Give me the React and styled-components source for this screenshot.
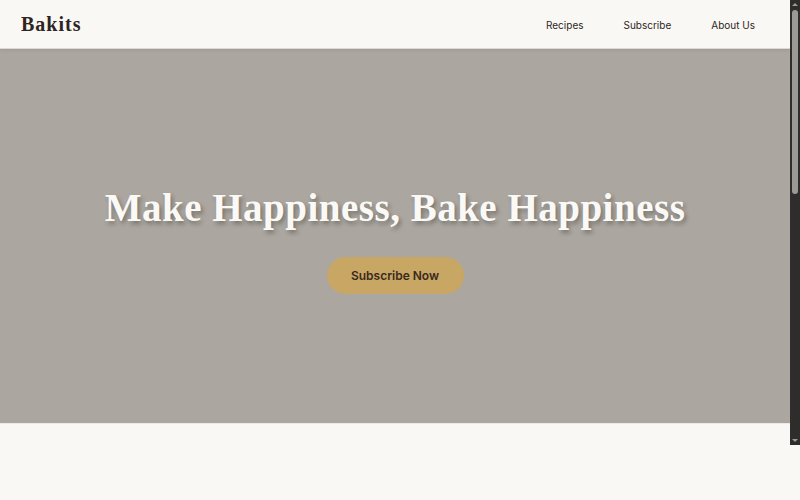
import React from 'react';
import styled, { createGlobalStyle } from 'styled-components';

const GlobalStyle = createGlobalStyle`
	html, body {
		margin: 0;
		padding: 0;
		background: #faf8f5;
		overflow: hidden;
	}
	* {
		box-sizing: border-box;
	}
`;

const Frame = styled.div`
	display: flex;
	height: 445px;
`;

const Page = styled.div`
	flex: 1;
	overflow-y: auto;
	background: #faf8f5;
	color: #2d2521;
	font-family: Inter, 'Noto Sans', sans-serif;
	scrollbar-width: none;
`;

const ScrollRail = styled.div`
	width: 10px;
	background: #2e2d2b;
	display: flex;
	flex-direction: column;
	align-items: center;
	padding: 10px 0;
	position: relative;
`;

const RailArrow = styled.span`
	position: absolute;
	left: 2px;
	width: 0;
	height: 0;
	border-left: 3px solid transparent;
	border-right: 3px solid transparent;
	${p => (p.$down ? 'bottom: 3px; border-top: 3px solid #9d9a96;' : 'top: 3px; border-bottom: 3px solid #9d9a96;')}
`;

const RailThumb = styled.div`
	width: 6px;
	height: 184px;
	border-radius: 3px;
	background: #9d9a96;
`;

const Header = styled.header`
	height: 49px;
	display: flex;
	align-items: center;
	justify-content: space-between;
	padding: 0 35px 0 21px;
	background: #faf8f5;
	border-bottom: 1px solid #dcd8d2;
	box-shadow: 0 1px 4px rgba(0, 0, 0, 0.08);
	position: relative;
	z-index: 1;
`;

const Logo = styled.div`
	font-family: 'Liberation Serif', 'DejaVu Serif', serif;
	font-weight: 700;
	font-size: 20px;
	letter-spacing: 1px;
	color: #2d2521;
`;

const Nav = styled.nav`
	display: flex;
	gap: 40px;
`;

const NavLink = styled.a`
	font-size: 10px;
	color: #2d2521;
	text-decoration: none;
	margin-top: 1px;
`;

const Hero = styled.section`
	height: 375px;
	background: #aba69f;
	display: flex;
	flex-direction: column;
	align-items: center;
	justify-content: center;
	padding-top: 6px;
	border-bottom: 1px solid #ece9e4;
`;

const Title = styled.h1`
	margin: 0 0 27px;
	font-family: 'Liberation Serif', 'DejaVu Serif', serif;
	font-weight: 700;
	font-size: 39px;
	letter-spacing: 0.5px;
	color: #fbf9f6;
	text-shadow: 2px 3px 4px rgba(0, 0, 0, 0.3);
`;

const Button = styled.button`
	width: 137px;
	height: 37px;
	border: none;
	border-radius: 19px;
	background: #c8a664;
	color: #3a2a1c;
	font-family: Inter, 'Noto Sans', sans-serif;
	font-weight: 600;
	font-size: 12px;
	cursor: pointer;
`;

const Section = styled.section`
	height: 610px;
	background: #faf8f5;
`;

const Footer = styled.div`
	height: 55px;
	background: #faf8f5;
`;

export default function App() {
	return (
		<>
			<GlobalStyle />
			<Frame>
				<Page>
					<Header>
						<Logo>Bakits</Logo>
						<Nav>
							<NavLink href="#">Recipes</NavLink>
							<NavLink href="#">Subscribe</NavLink>
							<NavLink href="#">About Us</NavLink>
						</Nav>
					</Header>
					<Hero>
						<Title>Make Happiness, Bake Happiness</Title>
						<Button>Subscribe Now</Button>
					</Hero>
					<Section />
				</Page>
				<ScrollRail>
					<RailArrow />
					<RailThumb />
					<RailArrow $down />
				</ScrollRail>
			</Frame>
			<Footer />
		</>
	);
}
